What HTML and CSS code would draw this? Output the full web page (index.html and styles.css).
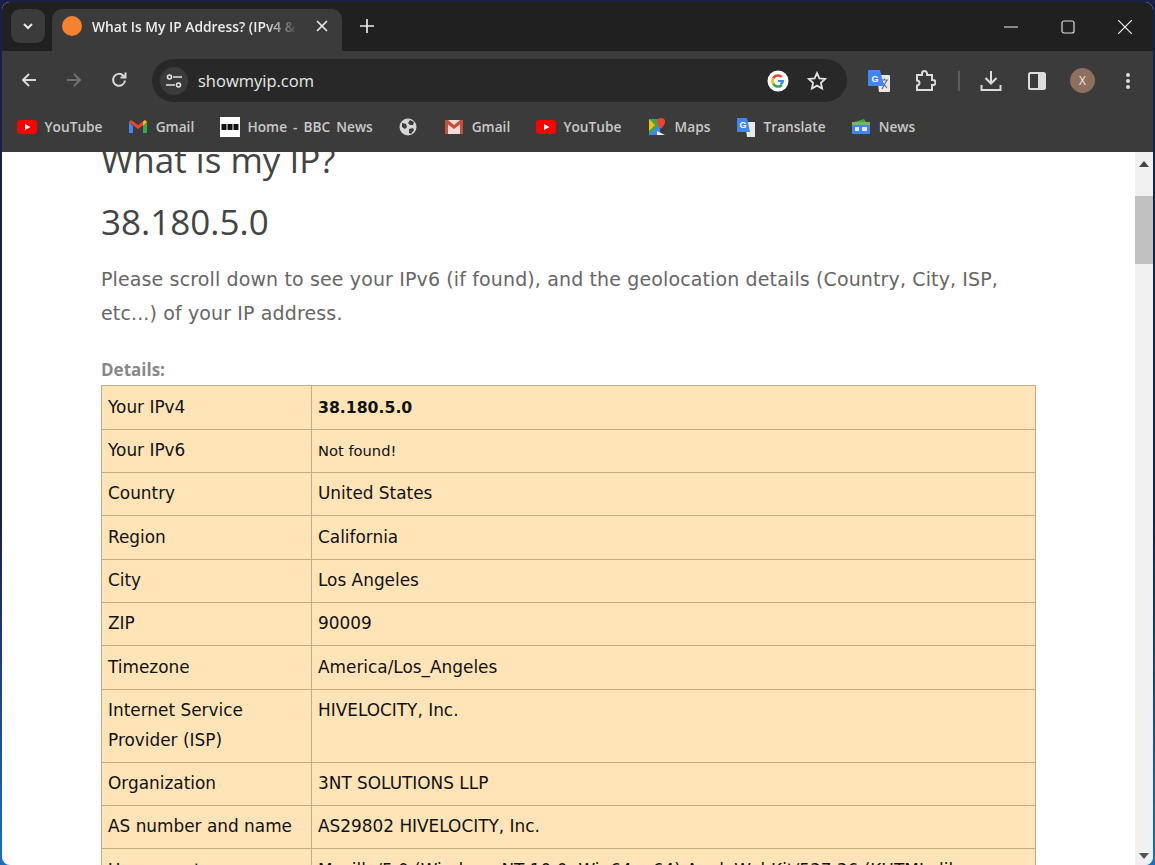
FILE: index.html
```html
<!DOCTYPE html>
<html lang="en">
<head>
  <meta charset="UTF-8">
  <title>What Is My IP Address?</title>
  <link rel="stylesheet" href="styles.css">
</head>
<body>
  <div class="window">
    <div class="tabstrip">
      <button class="tab-search">
        <svg width="12" height="12" viewBox="0 0 12 12"><path d="M2 4l4 4 4-4" fill="none" stroke="#e8e8e8" stroke-width="2"/></svg>
      </button>
      <div class="tab">
        <span class="favicon"></span>
        <span class="tab-title">What Is My IP Address? (IPv4 &amp; IPv6)</span>
        <svg class="tab-close" width="12" height="12" viewBox="0 0 12 12"><path d="M1 1l10 10M11 1L1 11" stroke="#e8e8e8" stroke-width="1.7"/></svg>
      </div>
      <svg class="new-tab" width="14" height="14" viewBox="0 0 14 14"><path d="M7 0v14M0 7h14" stroke="#e8e8e8" stroke-width="1.7"/></svg>
      <div class="win-controls">
        <svg width="14" height="14" viewBox="0 0 14 14"><path d="M0 7h14" stroke="#f0f0f0" stroke-width="1.2"/></svg>
        <svg width="14" height="14" viewBox="0 0 14 14"><rect x="1" y="1" width="12" height="12" rx="2" fill="none" stroke="#e0e0e0" stroke-width="1.2"/></svg>
        <svg width="14" height="14" viewBox="0 0 14 14"><path d="M0 0l14 14M14 0L0 14" stroke="#f0f0f0" stroke-width="1.2"/></svg>
      </div>
    </div>

    <div class="toolbar">
      <div class="nav-buttons">
        <svg width="18" height="18" viewBox="0 0 18 18"><path d="M16 9H3M9 3L3 9l6 6" fill="none" stroke="#d8d8d8" stroke-width="2"/></svg>
        <svg width="18" height="18" viewBox="0 0 18 18"><path d="M2 9h13M9 3l6 6-6 6" fill="none" stroke="#6f6f6f" stroke-width="2"/></svg>
        <svg width="18" height="18" viewBox="0 0 18 18"><path d="M15 9.500a6 6 0 1 1-1.800-5L15 6.300M15.500 1.500v5h-5" fill="none" stroke="#d8d8d8" stroke-width="2"/></svg>
      </div>
      <div class="omnibox">
        <span class="site-info">
          <svg width="16" height="14" viewBox="0 0 16 14"><g fill="none" stroke="#e4e4e4" stroke-width="1.600"><circle cx="3.500" cy="3" r="2"/><path d="M7 3h9M0 11h9"/><circle cx="12.500" cy="11" r="2"/></g></svg>
        </span>
        <span class="url">showmyip.com</span>
        <svg class="g-logo" width="22" height="22" viewBox="0 0 22 22">
          <circle cx="11" cy="11" r="10.500" fill="#fff"/>
          <path d="M11 5.500a5.500 5.500 0 0 1 3.700 1.400" fill="none" stroke="#ea4335" stroke-width="2.600"/>
          <path d="M6.200 8.300A5.500 5.500 0 0 1 11 5.500" fill="none" stroke="#ea4335" stroke-width="2.600"/>
          <path d="M6.200 13.700a5.500 5.500 0 0 1 0-5.400" fill="none" stroke="#fbbc05" stroke-width="2.600"/>
          <path d="M14.800 15a5.500 5.500 0 0 1-8.600-1.300" fill="none" stroke="#34a853" stroke-width="2.600"/>
          <path d="M11 10h6v1.500a6 6 0 0 1-2.200 3.500l-1.800-1.500a3 3 0 0 0 1.100-1.500H11z" fill="#4285f4"/>
        </svg>
        <svg class="star" width="20" height="20" viewBox="0 0 20 20"><path d="M10 2l2.400 5.300 5.800.6-4.300 3.900 1.200 5.700L10 14.600l-5.100 2.900 1.200-5.700L1.800 7.900l5.800-.6z" fill="none" stroke="#e4e4e4" stroke-width="1.800"/></svg>
      </div>
      <div class="tool-icons">
        <svg width="24" height="24" viewBox="0 0 24 24">
          <path d="M10 6h12a1 1 0 0 1 1 1v15a1 1 0 0 1-1 1H12z" fill="#e8e8e8"/>
          <path d="M14 11h7M17.500 9.500V11M15 20l5-9M16 14l4 5" fill="none" stroke="#5f6f80" stroke-width="1.200"/>
          <path d="M2 1h11l4 16H2a1 1 0 0 1-1-1V2a1 1 0 0 1 1-1z" fill="#4285f4"/>
          <text x="4.500" y="13" class="g-glyph">G</text>
        </svg>
        <svg width="22" height="22" viewBox="0 0 22 22"><path d="M3 5h5V3.500a2.500 2.500 0 0 1 5 0V5h5v5h1a2.500 2.500 0 0 1 0 5h-1v5H3v-4.500a2.500 2.500 0 0 0 0-5z" fill="none" stroke="#dcdcdc" stroke-width="2"/></svg>
        <span class="tool-sep"></span>
        <svg class="tool-download" width="22" height="22" viewBox="0 0 22 22"><path d="M11 1v12M5.500 8l5.500 5.500L16.500 8M1.500 15v5h19v-5" fill="none" stroke="#dcdcdc" stroke-width="2"/></svg>
        <svg class="tool-panel" width="20" height="20" viewBox="0 0 20 20"><rect x="2" y="2" width="16" height="16" rx="1.500" fill="none" stroke="#dcdcdc" stroke-width="2"/><rect x="11" y="2" width="7" height="16" fill="#dcdcdc"/></svg>
        <span class="avatar">X</span>
        <svg class="tool-menu" width="6" height="18" viewBox="0 0 6 18"><g fill="#dcdcdc"><circle cx="3" cy="3" r="2"/><circle cx="3" cy="9" r="2"/><circle cx="3" cy="15" r="2"/></g></svg>
      </div>
    </div>

    <div class="bookmarks">
      <a class="bookmark"><svg class="bm-icon" viewBox="0 0 20 20"><rect y="3" width="20" height="14" rx="3.500" fill="#f00"/><path d="M8 7l5.500 3L8 13z" fill="#fff"/></svg>YouTube</a>
      <a class="bookmark"><svg class="bm-icon" viewBox="0 0 20 20"><path d="M1 5v11h4V9z" fill="#4285f4"/><path d="M19 5v11h-4V9z" fill="#34a853"/><path d="M1 5l9 7 9-7-2-2-7 5-7-5z" fill="#ea4335"/><path d="M15 9l4-4-2-2-2 1.500z" fill="#fbbc05"/></svg>Gmail</a>
      <a class="bookmark"><svg class="bm-icon" viewBox="0 0 20 20"><rect width="20" height="20" fill="#fff"/><rect x="1.500" y="7" width="5" height="6" fill="#111"/><rect x="7.500" y="7" width="5" height="6" fill="#111"/><rect x="13.500" y="7" width="5" height="6" fill="#111"/></svg>Home - BBC News</a>
      <a class="bookmark"><svg class="bm-icon" viewBox="0 0 20 20"><circle cx="10" cy="10" r="8.500" fill="#d4d4d4"/><path d="M4 6l4 1 1 3-2 2-3-2zM12 3l4 2-1 3-3 0-2-2zM11 12l4-1 1 2-3 4-2-1z" fill="#3b3b3b"/></svg></a>
      <a class="bookmark"><svg class="bm-icon" viewBox="0 0 20 20"><rect x="1" y="3" width="18" height="14" fill="#f0dcd6"/><path d="M1 3h3l6 5 6-5h3v14h-3V7.500L10 12 4 7.500V17H1z" fill="#c5503c"/></svg>Gmail</a>
      <a class="bookmark"><svg class="bm-icon" viewBox="0 0 20 20"><rect y="3" width="20" height="14" rx="3.500" fill="#f00"/><path d="M8 7l5.500 3L8 13z" fill="#fff"/></svg>YouTube</a>
      <a class="bookmark"><svg class="bm-icon" viewBox="0 0 20 20"><path d="M2 2h11v16H2z" fill="#34a853"/><path d="M2 18L13 7v11z" fill="#4285f4"/><path d="M2 2l6 6-6 6z" fill="#fbbc05"/><path d="M10 14l8 4H10z" fill="#f0f0f0"/><path d="M14 1a4 4 0 0 1 4 4c0 3-4 7-4 7s-4-4-4-7a4 4 0 0 1 4-4z" fill="#ea4335"/></svg>Maps</a>
      <a class="bookmark"><svg class="bm-icon" viewBox="0 0 20 20"><path d="M9 5h10v15H11z" fill="#e8e8e8"/><path d="M1 1h10l3 14H1z" fill="#4285f4"/><text x="3.500" y="11" class="g-glyph">G</text></svg>Translate</a>
      <a class="bookmark"><svg class="bm-icon" viewBox="0 0 20 20"><path d="M3 5l10-3 2 3z" fill="#34a853"/><rect x="1" y="5" width="18" height="12" rx="1.500" fill="#4285f4"/><rect x="1" y="5" width="18" height="3" fill="#7fb069"/><rect x="4" y="10" width="4" height="4" fill="#dfe9f5"/><rect x="11" y="10" width="5" height="4" fill="#dfe9f5"/></svg>News</a>
    </div>

    <div class="viewport">
      <main class="page">
        <h1>What is my IP?</h1>
        <h2>38.180.5.0</h2>
        <p class="intro">Please scroll down to see your IPv6 (if found), and the geolocation details (Country, City, ISP, etc...) of your IP address.</p>
        <div class="details-label">Details:</div>
        <table class="details">
          <tr><td>Your IPv4</td><td><b>38.180.5.0</b></td></tr>
          <tr><td>Your IPv6</td><td><small>Not found!</small></td></tr>
          <tr><td>Country</td><td>United States</td></tr>
          <tr><td>Region</td><td>California</td></tr>
          <tr><td>City</td><td>Los Angeles</td></tr>
          <tr><td>ZIP</td><td>90009</td></tr>
          <tr><td>Timezone</td><td>America/Los_Angeles</td></tr>
          <tr><td>Internet Service Provider (ISP)</td><td>HIVELOCITY, Inc.</td></tr>
          <tr><td>Organization</td><td>3NT SOLUTIONS LLP</td></tr>
          <tr><td>AS number and name</td><td>AS29802 HIVELOCITY, Inc.</td></tr>
          <tr><td>User agent</td><td>Mozilla/5.0 (Windows NT 10.0; Win64; x64) AppleWebKit/537.36 (KHTML, like Gecko) Chrome/120.0.0.0 Safari/537.36</td></tr>
        </table>
      </main>
      <div class="scrollbar">
        <span class="arrow-up"></span>
        <span class="thumb"></span>
        <span class="arrow-down"></span>
      </div>
    </div>
  </div>
</body>
</html>
```

FILE: styles.css
```css
html, body {
  margin: 0;
  height: 100%;
  overflow: hidden;
}
body {
  background: linear-gradient(to bottom, #1a1f4a, #1a1f4a 60%, #1c6fc0);
  font-family: "Open Sans", sans-serif;
}
.window {
  height: 863px;
  margin: 2px 2px 0 2px;
  border-radius: 8px;
  overflow: hidden;
  display: flex;
  flex-direction: column;
  background: #fff;
}

/* tab strip */
.tabstrip {
  height: 49px;
  flex: none;
  background: #202020;
  display: flex;
  align-items: flex-start;
  padding-top: 7px;
  box-sizing: border-box;
}
.tab-search {
  width: 34px;
  height: 34px;
  margin-left: 9px;
  border: none;
  border-radius: 9px;
  background: #3b3b3b;
  display: flex;
  align-items: center;
  justify-content: center;
  padding: 0;
}
.tab {
  width: 290px;
  height: 42px;
  margin-left: 7px;
  border-radius: 10px 10px 0 0;
  background: #3b3b3b;
  display: flex;
  align-items: center;
  box-sizing: border-box;
  padding: 0 14px 8px 10px;
  color: #ececec;
  font-size: 13.800px;
  font-weight: 600;
}
.favicon {
  width: 20px;
  height: 20px;
  border-radius: 50%;
  background: #f5822f;
  flex: none;
}
.tab-title {
  margin-left: 10px;
  flex: 1;
  white-space: nowrap;
  overflow: hidden;
  -webkit-mask-image: linear-gradient(to right, #000 80%, transparent 96%);
  mask-image: linear-gradient(to right, #000 80%, transparent 96%);
}
.tab-close {
  margin-left: 8px;
  flex: none;
}
.new-tab {
  margin: 10px 0 0 18px;
}
.win-controls {
  margin-left: auto;
  margin-top: 11px;
  margin-right: 21px;
  display: flex;
  gap: 43px;
}

/* toolbar */
.toolbar {
  height: 52px;
  flex: none;
  background: #3b3b3b;
  display: flex;
  align-items: flex-start;
  box-sizing: border-box;
  padding-top: 8px;
}
.nav-buttons {
  width: 150px;
  padding: 12px 0 0 18px;
  box-sizing: border-box;
  display: flex;
  gap: 27px;
}
.omnibox {
  width: 695px;
  height: 43px;
  background: #282828;
  border-radius: 22px;
  display: flex;
  align-items: center;
  box-sizing: border-box;
  padding: 0 20px 0 8px;
  color: #e8e8e8;
  font-size: 16.500px;
}
.site-info {
  width: 28px;
  height: 28px;
  border-radius: 50%;
  background: #3b3b3b;
  display: flex;
  align-items: center;
  justify-content: center;
}
.url {
  margin-left: 10px;
  flex: 1;
}
.g-logo {
  margin-right: 18px;
}
.tool-icons {
  display: flex;
  align-items: center;
  height: 43px;
  padding-left: 20px;
  gap: 23px;
}
.tool-sep {
  width: 2px;
  height: 20px;
  background: #5e5e5e;
  margin: 0 -1px;
}
.tool-download {
  margin-left: -2px;
}
.tool-panel {
  margin-left: 2px;
}
.tool-menu {
  margin-left: 7px;
}
.avatar {
  width: 25px;
  height: 25px;
  border-radius: 50%;
  background: #8f6f5d;
  color: #f2e8e2;
  font-size: 12px;
  display: flex;
  align-items: center;
  justify-content: center;
}
.g-glyph {
  font-family: "Liberation Sans", sans-serif;
  font-size: 9px;
  font-weight: 700;
  fill: #fff;
}

/* bookmarks */
.bookmarks {
  height: 49px;
  flex: none;
  background: #3b3b3b;
  display: flex;
  align-items: center;
  padding-left: 15px;
  padding-bottom: 2px;
  box-sizing: border-box;
  gap: 25.700px;
  color: #c9c9c9;
  font-size: 13.700px;
  font-weight: 600;
  word-spacing: 2.500px;
}
.bookmark {
  display: flex;
  align-items: center;
  gap: 7.500px;
}
.bm-icon {
  width: 20px;
  height: 20px;
  flex: none;
}

/* page content */
.viewport {
  flex: 1;
  min-height: 0;
  display: flex;
  overflow: hidden;
}
.page {
  flex: 1;
  min-width: 0;
  padding-left: 99px;
  padding-right: 97px;
  color: #444;
}
h1 {
  margin: -15px 0 0 0;
  font-size: 35px;
  line-height: 46px;
  font-weight: 400;
}
h2 {
  margin: 16px 0 0 0;
  font-size: 35px;
  line-height: 46px;
  font-weight: 400;
}
.intro {
  margin: 17px 0 0 0;
  font-family: "DejaVu Sans", sans-serif;
  font-size: 19px;
  letter-spacing: 0.130px;
  line-height: 34px;
  color: #666;
}
.details-label {
  margin-top: 27px;
  margin-bottom: 1.500px;
  font-size: 17px;
  line-height: 26px;
  font-weight: 700;
  color: #888;
}
.details {
  width: 935px;
  border-collapse: collapse;
  background: #ffe4b8;
  color: #111;
  font-family: "DejaVu Sans", sans-serif;
  font-size: 16.900px;
  line-height: 30px;
}
.details td {
  border: 1px solid #c4ab84;
  padding: 5.400px 6px 6.900px;
  vertical-align: top;
}
.details tr:first-child td {
  padding: 6.160px 6px;
}
.details td:first-child {
  width: 197px;
}
.details b {
  font-size: 15.700px;
}
.details small {
  font-size: 14.700px;
  line-height: 1;
}

/* scrollbar */
.scrollbar {
  width: 18px;
  flex: none;
  background: #f0f0f0;
  display: flex;
  flex-direction: column;
  align-items: center;
}
.arrow-up {
  margin-top: 9px;
  border-left: 5px solid transparent;
  border-right: 5px solid transparent;
  border-bottom: 6px solid #444;
}
.thumb {
  width: 100%;
  height: 68px;
  margin-top: 29px;
  background: #c1c1c1;
}
.arrow-down {
  margin-top: auto;
  margin-bottom: 6px;
  border-left: 5px solid transparent;
  border-right: 5px solid transparent;
  border-top: 6px solid #555;
}
```
